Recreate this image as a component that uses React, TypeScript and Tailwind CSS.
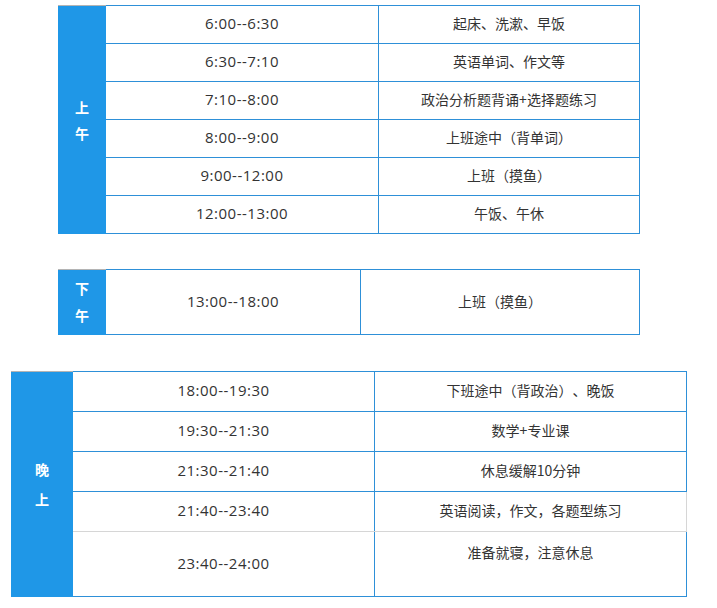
const font = { fontFamily: '"Microsoft YaHei", "Noto Sans CJK SC", "Noto Sans", sans-serif' };

type Row = { time: string; task: string; h: string; grey?: boolean; top?: boolean };

const morning: Row[] = [
  { time: "6:00--6:30", task: "起床、洗漱、早饭", h: "h-[38px]" },
  { time: "6:30--7:10", task: "英语单词、作文等", h: "h-[38px]" },
  { time: "7:10--8:00", task: "政治分析题背诵+选择题练习", h: "h-[38px]" },
  { time: "8:00--9:00", task: "上班途中（背单词）", h: "h-[38px]" },
  { time: "9:00--12:00", task: "上班（摸鱼）", h: "h-[38px]" },
  { time: "12:00--13:00", task: "午饭、午休", h: "h-[38px]" },
];

const evening: Row[] = [
  { time: "18:00--19:30", task: "下班途中（背政治）、晚饭", h: "h-[40px]" },
  { time: "19:30--21:30", task: "数学+专业课", h: "h-[40px]" },
  { time: "21:30--21:40", task: "休息缓解10分钟", h: "h-[40px]" },
  { time: "21:40--23:40", task: "英语阅读，作文，各题型练习", h: "h-[40px]", grey: true },
  { time: "23:40--24:00", task: "准备就寝，注意休息", h: "h-[65px]", top: true },
];

function Label({ chars, w, lh }: { chars: string[]; w: string; lh: string }) {
  return (
    <div
      className={`${w} shrink-0 bg-[#1f97e7] border-t border-[#b4b4b4] flex flex-col items-center justify-center pb-[1px] text-white font-bold text-[14px] ${lh}`}
    >
      {chars.map((c) => (
        <span key={c}>{c}</span>
      ))}
    </div>
  );
}

function Table({
  rows,
  cols,
  label,
  labelW,
  lh,
  className,
}: {
  rows: Row[];
  cols: string;
  label: string[];
  labelW: string;
  lh: string;
  className: string;
}) {
  return (
    <div className={`flex ${className}`}>
      <Label chars={label} w={labelW} lh={lh} />
      <div className="flex flex-col border-t border-[#2e90d8]">
        {rows.map((r) => (
          <div
            key={r.time}
            className={`grid ${cols} ${r.h} border-b border-r ${
              r.grey ? "border-b-[#d6d6d6] border-r-[#d6d6d6]" : "border-[#2e90d8]"
            }`}
          >
            <div
              className="flex items-center justify-center pb-[2px] border-r border-[#2e90d8] text-[15px] tracking-[0.5px]"
              style={{ fontFamily: '"Open Sans", "Noto Sans", sans-serif' }}
            >
              {r.time}
            </div>
            <div className={`flex justify-center ${r.top ? "items-start pt-[10px]" : "items-center pb-[2px]"}`}>
              {r.task}
            </div>
          </div>
        ))}
      </div>
    </div>
  );
}

export default function App() {
  return (
    <div
      className="w-[717px] h-[608px] bg-white text-[#333] text-[14px] overflow-hidden [text-spacing-trim:space-all]"
      style={font}
    >
      <Table
        rows={morning}
        cols="grid-cols-[273px_260px]"
        label={["上", "午"]}
        labelW="w-[48px]"
        lh="leading-[26px]"
        className="ml-[58px] mt-[5px]"
      />
      <Table
        rows={[{ time: "13:00--18:00", task: "上班（摸鱼）", h: "h-[65px]" }]}
        cols="grid-cols-[255px_278px]"
        label={["下", "午"]}
        labelW="w-[48px]"
        lh="leading-[27px]"
        className="ml-[58px] mt-[35px]"
      />
      <Table
        rows={evening}
        cols="grid-cols-[302px_311px]"
        label={["晚", "上"]}
        labelW="w-[62px]"
        lh="leading-[30px]"
        className="ml-[11px] mt-[36px]"
      />
    </div>
  );
}
